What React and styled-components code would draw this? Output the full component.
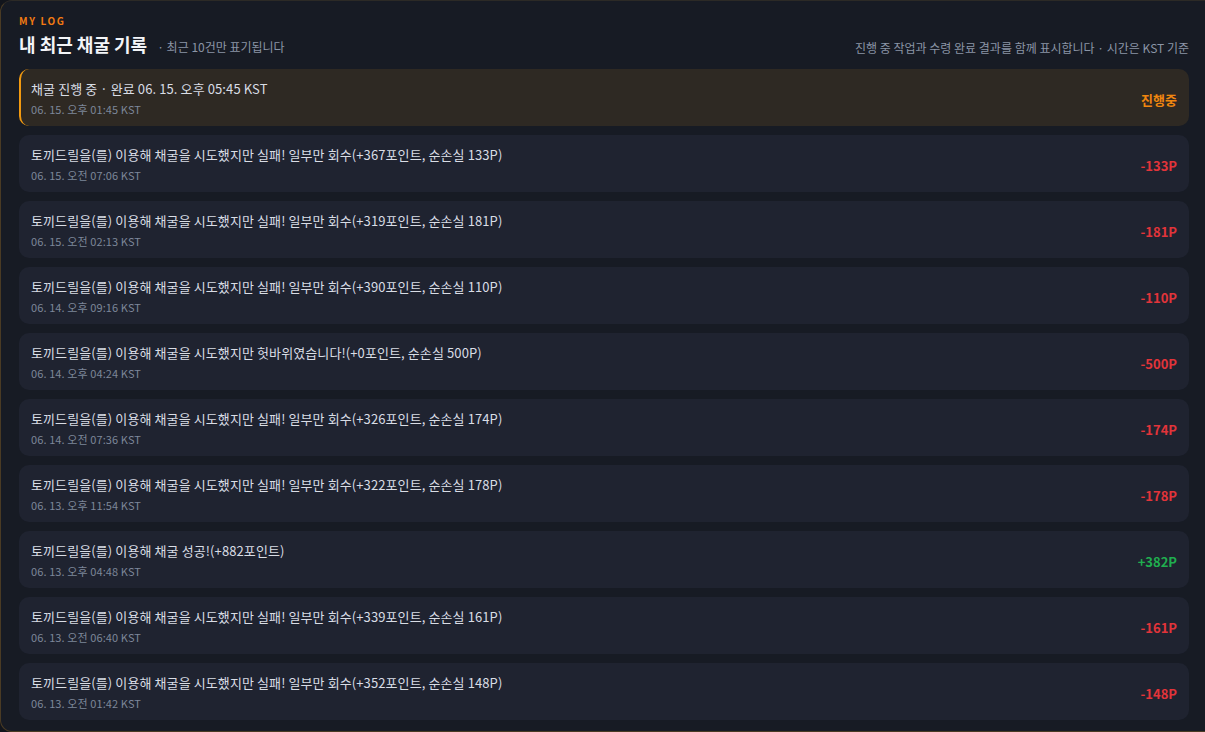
import React from 'react';
import styled, { createGlobalStyle } from 'styled-components';

const GlobalStyle = createGlobalStyle`
  html, body {
    margin: 0;
    padding: 0;
    background: #12151c;
    overflow: hidden;
  }
  body {
    font-family: "Noto Sans CJK KR", "Noto Sans", sans-serif;
  }
`;

const Panel = styled.section`
  box-sizing: border-box;
  width: 1222px;
  height: 732px;
  padding: 13px 32px 0 18px;
  background: #171b24;
  border: 1px solid #4a3b24;
  border-top-color: #2c2a26;
  border-radius: 12px;
`;

const Eyebrow = styled.div`
  font-size: 10px;
  font-weight: 700;
  letter-spacing: 1.6px;
  color: #f27a12;
  line-height: 14px;
`;

const HeaderRow = styled.div`
  display: flex;
  align-items: flex-end;
  justify-content: space-between;
  margin-top: 3px;
`;

const TitleGroup = styled.div`
  display: flex;
  align-items: baseline;
  gap: 10px;
`;

const Title = styled.h2`
  margin: 0;
  font-size: 18px;
  font-weight: 700;
  color: #f3f5f8;
  line-height: 26px;
`;

const Muted = styled.span`
  font-size: 12px;
  color: #8b95a6;
  line-height: 18px;
`;

const List = styled.div`
  display: flex;
  flex-direction: column;
  gap: 9px;
  margin-top: 12px;
`;

const Row = styled.div`
  box-sizing: border-box;
  height: 57px;
  display: flex;
  align-items: center;
  justify-content: space-between;
  padding: 0 12px 0 ${p => (p.$active ? 10 : 12)}px;
  border-radius: 10px;
  background: ${p => (p.$active ? '#2e2923' : '#1f2330')};
  border-left: ${p => (p.$active ? '2px solid #f29a10' : 'none')};
`;

const RowText = styled.div`
  display: flex;
  flex-direction: column;
  gap: 4px;
  margin-top: 1px;
`;

const RowTitle = styled.div`
  font-size: 13px;
  letter-spacing: 0.1px;
  color: #d9dde5;
  line-height: 18px;
`;

const RowDate = styled.div`
  font-size: 11px;
  letter-spacing: 0.1px;
  color: #7d8799;
  line-height: 14px;
`;

const Amount = styled.div`
  font-size: 13px;
  font-weight: 700;
  margin-top: 3px;
  color: ${p => (p.$tone === 'up' ? '#1fae4f' : p.$tone === 'pending' ? '#f0860f' : '#e2343a')};
`;

const fail = (got, loss) => `토끼드릴을(를) 이용해 채굴을 시도했지만 실패! 일부만 회수(+${got}포인트, 순손실 ${loss}P)`;

const logs = [
  { title: '채굴 진행 중 · 완료 06. 15. 오후 05:45 KST', date: '06. 15. 오후 01:45 KST', amount: '진행중', tone: 'pending', active: true },
  { title: fail(367, 133), date: '06. 15. 오전 07:06 KST', amount: '-133P' },
  { title: fail(319, 181), date: '06. 15. 오전 02:13 KST', amount: '-181P' },
  { title: fail(390, 110), date: '06. 14. 오후 09:16 KST', amount: '-110P' },
  { title: '토끼드릴을(를) 이용해 채굴을 시도했지만 헛바위였습니다!(+0포인트, 순손실 500P)', date: '06. 14. 오후 04:24 KST', amount: '-500P' },
  { title: fail(326, 174), date: '06. 14. 오전 07:36 KST', amount: '-174P' },
  { title: fail(322, 178), date: '06. 13. 오후 11:54 KST', amount: '-178P' },
  { title: '토끼드릴을(를) 이용해 채굴 성공!(+882포인트)', date: '06. 13. 오후 04:48 KST', amount: '+382P', tone: 'up' },
  { title: fail(339, 161), date: '06. 13. 오전 06:40 KST', amount: '-161P' },
  { title: fail(352, 148), date: '06. 13. 오전 01:42 KST', amount: '-148P' },
];

export default function App() {
  return (
    <>
      <GlobalStyle />
      <Panel>
        <Eyebrow>MY LOG</Eyebrow>
        <HeaderRow>
          <TitleGroup>
            <Title>내 최근 채굴 기록</Title>
            <Muted>· 최근 10건만 표기됩니다</Muted>
          </TitleGroup>
          <Muted>진행 중 작업과 수령 완료 결과를 함께 표시합니다 · 시간은 KST 기준</Muted>
        </HeaderRow>
        <List>
          {logs.map((log, i) => (
            <Row key={i} $active={log.active}>
              <RowText>
                <RowTitle>{log.title}</RowTitle>
                <RowDate>{log.date}</RowDate>
              </RowText>
              <Amount $tone={log.tone}>{log.amount}</Amount>
            </Row>
          ))}
        </List>
      </Panel>
    </>
  );
}
